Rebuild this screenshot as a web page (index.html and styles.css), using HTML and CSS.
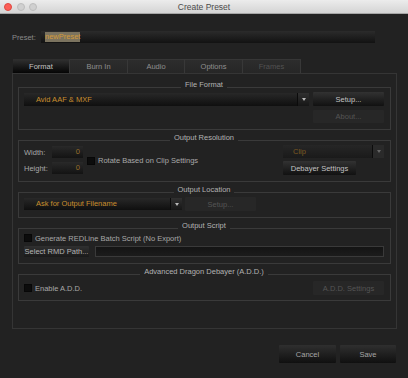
FILE: index.html
```html
<!DOCTYPE html>
<html lang="en">
<head>
    <meta charset="UTF-8">
    <title>Create Preset</title>
    <link rel="stylesheet" href="styles.css">
</head>
<body>
    <div class="titlebar">
        <div class="lights">
            <span class="light close"></span>
            <span class="light"></span>
            <span class="light"></span>
        </div>
        <div class="title">Create Preset</div>
        <div></div>
    </div>

    <div class="preset-row">
        <div class="preset-label">Preset:</div>
        <div class="preset-input"><span class="selected">newPreset</span></div>
    </div>

    <div class="tabs">
        <div class="tab active">Format</div>
        <div class="tab">Burn In</div>
        <div class="tab">Audio</div>
        <div class="tab">Options</div>
        <div class="tab disabled">Frames</div>
    </div>

    <div class="panel">
        <!-- File Format -->
        <div class="group">
            <div class="group-title"><span>File Format</span></div>
            <div class="row row-top">
                <div class="combo wide">
                    <div class="value">Avid AAF &amp; MXF</div>
                    <div class="arrow"><i></i></div>
                </div>
                <div class="btn setup">Setup...</div>
            </div>
            <div class="row row-about">
                <div class="btn disabled about">About...</div>
            </div>
        </div>

        <!-- Output Resolution -->
        <div class="group">
            <div class="group-title"><span>Output Resolution</span></div>
            <div class="res-row">
                <div class="dims">
                    <div class="dim">
                        <div class="dim-label">Width:</div>
                        <div class="num">0</div>
                    </div>
                    <div class="dim">
                        <div class="dim-label">Height:</div>
                        <div class="num">0</div>
                    </div>
                </div>
                <div class="check rotate">
                    <span class="checkbox"></span>
                    <span>Rotate Based on Clip Settings</span>
                </div>
                <div class="res-right">
                    <div class="combo clip">
                        <div class="value">Clip</div>
                        <div class="arrow"><i></i></div>
                    </div>
                    <div class="btn debayer">Debayer Settings</div>
                </div>
            </div>
        </div>

        <!-- Output Location -->
        <div class="group">
            <div class="group-title"><span>Output Location</span></div>
            <div class="row row-top">
                <div class="combo location">
                    <div class="value">Ask for Output Filename</div>
                    <div class="arrow"><i></i></div>
                </div>
                <div class="btn disabled loc-setup">Setup...</div>
            </div>
        </div>

        <!-- Output Script -->
        <div class="group">
            <div class="group-title"><span>Output Script</span></div>
            <div class="row row-check">
                <div class="check">
                    <span class="checkbox"></span>
                    <span>Generate REDLine Batch Script (No Export)</span>
                </div>
            </div>
            <div class="row row-path">
                <div class="btn small rmd">Select RMD Path...</div>
                <div class="path-input"></div>
            </div>
        </div>

        <!-- A.D.D. -->
        <div class="group last">
            <div class="group-title"><span>Advanced Dragon Debayer (A.D.D.)</span></div>
            <div class="row row-add">
                <div class="check">
                    <span class="checkbox"></span>
                    <span>Enable A.D.D.</span>
                </div>
                <div class="btn disabled add-settings">A.D.D. Settings</div>
            </div>
        </div>
    </div>

    <div class="footer">
        <div class="btn big cancel">Cancel</div>
        <div class="btn big save">Save</div>
    </div>
</body>
</html>
```

FILE: styles.css
```css
* {
    box-sizing: border-box;
}
body {
    margin: 0;
    width: 408px;
    height: 378px;
    overflow: hidden;
    background: #222222;
    font-family: "Liberation Sans", Arial, sans-serif;
    font-size: 7.5px;
    color: #a8a8a8;
}

/* window chrome */
.titlebar {
    height: 14px;
    display: grid;
    grid-template-columns: 1fr auto 1fr;
    align-items: center;
    background: linear-gradient(#ececec, #d4d4d4);
    border-bottom: 1px solid #a6a6a6;
}
.lights {
    display: flex;
    gap: 4.5px;
    padding-left: 4px;
}
.light {
    width: 8px;
    height: 8px;
    border-radius: 50%;
    background: #d0d0d0;
    border: 1px solid #bdbdbd;
}
.light.close {
    background: #fc5f57;
    border-color: #df4840;
}
.title {
    font-size: 8.5px;
    color: #4b4b4b;
}

/* preset name */
.preset-row {
    display: flex;
    align-items: center;
    height: 12px;
    margin-top: 17px;
    padding-left: 12px;
}
.preset-label {
    width: 29px;
    color: #8a8a8a;
}
.preset-input {
    width: 334px;
    height: 12px;
    display: flex;
    align-items: center;
    padding-left: 4px;
    background: linear-gradient(#2b2b2b, #121212);
}
.selected {
    line-height: 10px;
    background: #7b735f;
    color: #d39a3a;
}

/* tabs */
.tabs {
    display: flex;
    height: 14px;
    margin-top: 16px;
    padding-left: 13px;
}
.tab {
    width: 58px;
    height: 14px;
    line-height: 14px;
    text-align: center;
    color: #8f8f8f;
    background: linear-gradient(#2d2d2d, #262626);
    border-top: 1px solid #363636;
    border-right: 1px solid #383838;
    line-height: 13px;
}
.tab:first-child,
.tab:nth-child(3) {
    width: 57px;
}
.tab.active {
    color: #c4c4c4;
    background: linear-gradient(#2e2e2e, #050505);
    border-top-color: #2e2e2e;
}
.tab.disabled {
    color: #525252;
}

.panel {
    width: 385px;
    margin-left: 12px;
    border: 1px solid #353535;
    padding: 13px 5px 27px;
}

/* group boxes */
.group {
    border: 1px solid #3a3a3a;
    padding: 0 6px 6px 5px;
    margin-top: 10px;
}
.group:first-child {
    margin-top: 0;
}
.group.last {
    padding-bottom: 5px;
}
.group-title {
    height: 10px;
    line-height: 10px;
    margin-top: -8px;
    text-align: center;
    color: #b2b2b2;
}
.group-title span {
    background: #222222;
    padding: 0 4px;
}
.row {
    display: flex;
    align-items: center;
}
.row-top {
    height: 14px;
    margin-top: 2px;
}
.row-about {
    height: 13px;
    margin-top: 4px;
    justify-content: flex-end;
}
.row-check {
    height: 10px;
    margin-top: 2px;
}
.row-path {
    height: 11px;
    margin-top: 3px;
}
.row-add {
    height: 14px;
    margin-top: 4px;
    justify-content: space-between;
}

/* controls */
.btn {
    height: 14px;
    display: flex;
    align-items: center;
    justify-content: center;
    color: #c2c2c2;
    background: linear-gradient(#323232, #111111);
    border-radius: 1px;
    white-space: nowrap;
}
.btn.disabled {
    color: #555555;
    background: #272727;
}
.btn.small {
    height: 11px;
    background: linear-gradient(#303030, #1a1a1a);
    color: #b4b4b4;
}
.btn.big {
    height: 18px;
    color: #a6a6a6;
    background: linear-gradient(#2f2f2f, #101010);
}
.setup,
.about,
.add-settings {
    width: 71px;
}
.about {
    height: 13px;
}
.loc-setup {
    width: 71px;
    margin-left: 3px;
}
.debayer {
    width: 73px;
}
.rmd {
    width: 65px;
}

.combo {
    display: flex;
    height: 13px;
}
.combo .value {
    flex: 1;
    padding-left: 12px;
    line-height: 13px;
    color: #c98e2e;
    background: linear-gradient(#282828, #0f0f0f);
    white-space: nowrap;
}
.combo .arrow {
    width: 12px;
    display: flex;
    align-items: center;
    justify-content: center;
    border-left: 1px solid #0b0b0b;
    background: linear-gradient(#303030, #161616);
}
.combo .arrow i {
    width: 0;
    height: 0;
    border-left: 2.5px solid transparent;
    border-right: 2.5px solid transparent;
    border-top: 3px solid #b8b8b8;
}
.combo.wide {
    flex: 1;
    margin-right: 4px;
}
.combo.location {
    width: 158px;
    height: 12px;
}
.combo.location .value {
    line-height: 12px;
}
.combo.clip .value {
    padding-left: 10px;
    color: #7d5a22;
    background: linear-gradient(#262626, #1a1a1a);
}
.combo.clip .arrow {
    background: #2a2a2a;
}
.combo.clip .arrow i {
    border-top-color: #666666;
}

.res-row {
    display: flex;
    align-items: flex-start;
    margin-top: 2px;
}
.dims {
    display: flex;
    flex-direction: column;
    gap: 4px;
    padding-top: 1px;
}
.dim {
    display: flex;
    align-items: center;
    height: 12px;
}
.dim-label {
    width: 28px;
}
.num {
    width: 31px;
    height: 12px;
    line-height: 12px;
    text-align: right;
    padding-right: 3px;
    color: #9a6f2a;
    background: linear-gradient(#292929, #131313);
}
.check {
    display: flex;
    align-items: center;
}
.check.rotate {
    align-self: center;
    margin-left: 4px;
    margin-top: 1px;
}
.checkbox {
    width: 8px;
    height: 8px;
    margin-right: 3px;
    background: #0c0c0c;
    border: 1px solid #070707;
}
.res-right {
    margin-left: auto;
    width: 101px;
    display: flex;
    flex-direction: column;
    gap: 3px;
}

.path-input {
    flex: 1;
    height: 11px;
    margin-left: 6px;
    border: 1px solid #3a3a3a;
    background: linear-gradient(#141414, #1c1c1c);
}

.footer {
    display: flex;
    justify-content: flex-end;
    gap: 4px;
    margin-top: 16px;
    padding-right: 12px;
}
.cancel {
    width: 57px;
}
.save {
    width: 56px;
}
```
